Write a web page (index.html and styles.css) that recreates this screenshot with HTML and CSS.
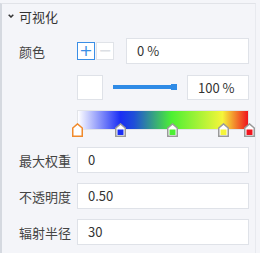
FILE: index.html
```html
<!DOCTYPE html>
<html lang="zh-CN">
<head>
  <meta charset="UTF-8">
  <title>可视化</title>
  <link rel="stylesheet" href="styles.css">
</head>
<body>
  <div class="panel">
    <div class="section-title">
      <svg class="caret" width="6" height="4" viewBox="0 0 6 4">
        <polyline points="0.7,0.7 3,3 5.3,0.7" fill="none" stroke="#333" stroke-width="1.5"/>
      </svg>
      <span>可视化</span>
    </div>

    <div class="form">
      <div class="row">
        <label>颜色</label>
        <div class="color-ctrl">
          <button class="btn-sq active">+</button>
          <button class="btn-sq disabled">−</button>
          <div class="input grow">0 %</div>
        </div>
      </div>

      <div class="row">
        <label></label>
        <div class="color-ctrl">
          <div class="swatch"></div>
          <div class="slider"><div class="track"></div><div class="thumb"></div></div>
          <div class="input pct">100 %</div>
        </div>
      </div>

      <div class="row ramp-row">
        <label></label>
        <div class="ramp">
          <div class="ramp-bar"></div>
          <svg class="stop" style="left: 0%" width="11" height="14" viewBox="0 0 11 14">
            <polygon points="0.75,13.25 0.75,5 5.5,0.9 10.25,5 10.25,13.25" fill="#fff" stroke="#f08a2c" stroke-width="1.5"/>
          </svg>
          <svg class="stop" style="left: 25%" width="11" height="14" viewBox="0 0 11 14">
            <polygon points="0.75,13.25 0.75,5 5.5,0.9 10.25,5 10.25,13.25" fill="#fff" stroke="#9a9a9a" stroke-width="1.5"/>
            <rect x="2.5" y="6.5" width="6" height="5.5" fill="#1a2ef5"/>
          </svg>
          <svg class="stop" style="left: 55%" width="11" height="14" viewBox="0 0 11 14">
            <polygon points="0.75,13.25 0.75,5 5.5,0.9 10.25,5 10.25,13.25" fill="#fff" stroke="#9a9a9a" stroke-width="1.5"/>
            <rect x="2.5" y="6.5" width="6" height="5.5" fill="#4cf033"/>
          </svg>
          <svg class="stop" style="left: 85%" width="11" height="14" viewBox="0 0 11 14">
            <polygon points="0.75,13.25 0.75,5 5.5,0.9 10.25,5 10.25,13.25" fill="#fff" stroke="#9a9a9a" stroke-width="1.5"/>
            <rect x="2.5" y="6.5" width="6" height="5.5" fill="#f5f53a"/>
          </svg>
          <svg class="stop" style="left: 100%" width="11" height="14" viewBox="0 0 11 14">
            <polygon points="0.75,13.25 0.75,5 5.5,0.9 10.25,5 10.25,13.25" fill="#fff" stroke="#9a9a9a" stroke-width="1.5"/>
            <rect x="2.5" y="6.5" width="6" height="5.5" fill="#f0141e"/>
          </svg>
        </div>
      </div>

      <div class="row">
        <label>最大权重</label>
        <div class="input">0</div>
      </div>
      <div class="row">
        <label>不透明度</label>
        <div class="input">0.50</div>
      </div>
      <div class="row">
        <label>辐射半径</label>
        <div class="input">30</div>
      </div>
    </div>
  </div>
</body>
</html>
```

FILE: styles.css
```css
body {
  margin: 0;
  padding: 3px 0 0 0;
  background: #f4f5f9;
  font-family: "Noto Sans CJK SC", "Noto Sans", sans-serif;
  font-size: 13px;
  color: #333;
}
.panel {
  height: 250px;
  box-sizing: border-box;
  border-top: 1px solid #e1e3e8;
  border-left: 2px solid #d5d9e0;
  border-right: 1px solid #e8eaef;
  margin-right: 4px;
}
.section-title {
  display: flex;
  align-items: center;
  height: 24px;
  padding-left: 17px;
  font-size: 13px;
  color: #333;
  position: relative;
}
.caret {
  position: absolute;
  left: 6px;
  top: 10px;
}
.form {
  display: flex;
  flex-direction: column;
  gap: 10px;
  padding: 10px 9px 0 17px;
}
.row {
  display: grid;
  grid-template-columns: 58px 172px;
  align-items: center;
  height: 26px;
}
.row label {
  color: #444;
}
.input {
  height: 26px;
  box-sizing: border-box;
  border: 1px solid #dfe2e8;
  background: #fff;
  padding-left: 10px;
  line-height: 24px;
  color: #333;
}
.color-ctrl {
  display: flex;
  align-items: center;
}
.btn-sq {
  width: 18px;
  height: 18px;
  box-sizing: border-box;
  padding: 0;
  border: 1px solid #e0e3e8;
  background: #fff;
  color: #ccc;
  font-size: 16px;
  line-height: 14px;
  font-family: "DejaVu Sans", sans-serif;
  margin-right: 1px;
}
.btn-sq.active {
  border-color: #3a8ee6;
  color: #3a8ee6;
}
.btn-sq.disabled {
  color: #dcdfe4;
}
.grow {
  flex: 1;
  margin-left: 11px;
}
.swatch {
  width: 26px;
  height: 25px;
  box-sizing: border-box;
  border: 1px solid #dfe2e8;
  background: #fff;
}
.slider {
  position: relative;
  width: 64px;
  height: 7px;
  margin-left: 10px;
}
.track {
  position: absolute;
  left: 0;
  right: 6px;
  top: 1px;
  height: 4px;
  background: #2f8be6;
}
.thumb {
  position: absolute;
  left: 58px;
  top: 0;
  width: 6px;
  height: 6px;
  background: #2f8be6;
}
.pct {
  margin-left: auto;
  width: 62px;
  height: 25px;
  line-height: 23px;
}
.ramp-row {
  height: 27px;
  align-items: start;
}
.ramp {
  position: relative;
  height: 27px;
}
.ramp-bar {
  height: 20px;
  box-sizing: border-box;
  border: 1px solid #e2e4e9;
  background: linear-gradient(to right, #ffffff 0%, #1a2ef5 25%, #1f4fd8 33%, #4cf033 55%, #f5f53a 85%, #f0141e 100%);
}
.stop {
  position: absolute;
  top: 13px;
  margin-left: -5px;
}
```
